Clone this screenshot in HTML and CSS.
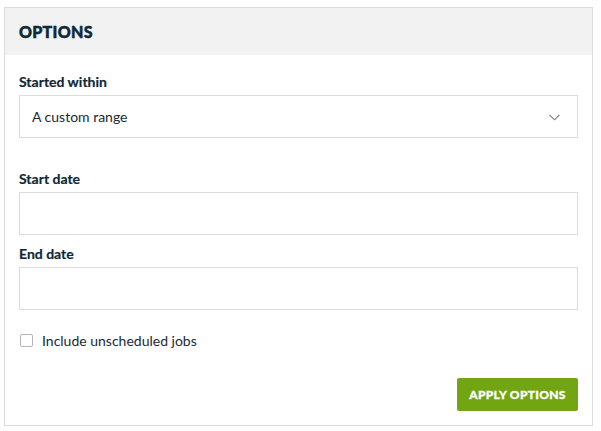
FILE: index.html
```html
<!DOCTYPE html>
<html>
<head>
<meta charset="utf-8">
<link rel="stylesheet" href="styles.css">
</head>
<body>
<div class="card">
  <div class="card-header">OPTIONS</div>
  <div class="card-body">
    <div class="field field-select">
      <label class="label">Started within</label>
      <div class="select">
        <span>A custom range</span>
        <svg class="chev" width="11" height="7" viewBox="0 0 11 7"><path d="M0.5 0.8 L5.5 5.8 L10.5 0.8" fill="none" stroke="#6f7d86" stroke-width="1.1"/></svg>
      </div>
    </div>
    <div class="field">
      <label class="label">Start date</label>
      <div class="input"></div>
    </div>
    <div class="field">
      <label class="label">End date</label>
      <div class="input"></div>
    </div>
    <div class="check-row">
      <span class="checkbox"></span>
      <span class="check-label">Include unscheduled jobs</span>
    </div>
    <div class="actions">
      <button class="btn">APPLY OPTIONS</button>
    </div>
  </div>
</div>
</body>
</html>
```
FILE: styles.css
```css
html, body { margin: 0; padding: 0; background: #fff; }
body { font-family: "Lato", "Open Sans", sans-serif; color: #0e2a38; }
.card {
  margin: 7px 0 0 4px;
  width: 587px;
  height: 417px;
  border: 1px solid #dcdcdc;
  display: flex;
  flex-direction: column;
}
.card-header {
  background: #f2f2f2;
  height: 47px;
  box-sizing: border-box;
  padding: 14px 14px 0;
  font-weight: 900;
  font-size: 16px;
  letter-spacing: 0.3px;
  line-height: 20px;
  -webkit-text-stroke: 0.5px #0e2a38;
}
.card-body {
  flex: 1;
  padding: 17px 14px 14px;
  display: flex;
  flex-direction: column;
}
.field { display: flex; flex-direction: column; }
.field-select { margin-bottom: 22px; }
.field + .field { margin-top: 9px; }
.label {
  font-weight: 700;
  font-size: 14px;
  line-height: 20px;
  margin-bottom: 3px;
  -webkit-text-stroke: 0.2px #0e2a38;
}
.select, .input {
  height: 43px;
  box-sizing: border-box;
  border: 1px solid #dcdcdc;
  background: #fff;
}
.select {
  display: flex;
  align-items: center;
  justify-content: space-between;
  padding: 0 17px 0 12px;
  font-size: 14px;
  color: #1a2a33;
}
.chev { margin-top: 1px; }
.check-row {
  display: flex;
  align-items: center;
  margin-top: 23px;
  height: 14px;
}
.checkbox {
  width: 11px;
  height: 11px;
  border: 1px solid #b5b5b5;
  border-radius: 2px;
  margin-left: 1px;
  margin-right: 9px;
}
.check-label { font-size: 14px; color: #1a2a33; }
.actions {
  margin-top: auto;
  display: flex;
  justify-content: flex-end;
}
.btn {
  width: 121px;
  height: 33px;
  border: none;
  border-radius: 2px;
  background: #72a512;
  color: #fff;
  font-family: "Lato", sans-serif;
  font-weight: 900;
  font-size: 12px;
  letter-spacing: 0.3px;
  padding: 0;
  -webkit-text-stroke: 0.3px #fff;
}
```
